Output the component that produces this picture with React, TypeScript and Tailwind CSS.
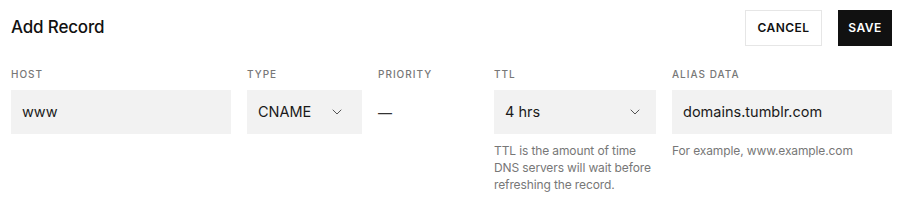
import { ChevronDown } from 'lucide-react'

const labelCls =
  'h-[17px] text-[10px] font-medium uppercase tracking-[0.1em] text-[#777] leading-[17px]'
const boxCls = 'h-[44px] bg-[#f2f2f2] flex items-center px-[11px] text-[14.5px] text-[#1a1a1a]'
const helpCls = 'mt-[8px] text-[12px] leading-[17px] text-[#777] tracking-[-0.01em]'

export default function App() {
  return (
    <div
      className="w-[898px] h-[211px] bg-white pl-[11px] pr-[6px] pt-[10px]"
      style={{ fontFamily: 'Inter, "Liberation Sans", sans-serif' }}
    >
      <header className="flex items-center justify-between h-[36px]">
        <h1 className="text-[17px] font-medium text-[#111] tracking-[-0.01em]">Add Record</h1>
        <div className="flex gap-4">
          <button className="h-[36px] w-[77px] border border-[#e6e6e6] text-[12px] font-semibold tracking-[0.04em] text-[#111]">
            CANCEL
          </button>
          <button className="h-[36px] w-[54px] bg-[#111] text-[12px] font-semibold tracking-[0.04em] text-white">
            SAVE
          </button>
        </div>
      </header>

      <div className="mt-[20px] grid grid-cols-[220px_115px_100px_162px_220px] gap-x-4">
        <div>
          <div className={labelCls}>Host</div>
          <div className={`${boxCls} mt-[7px]`}>www</div>
        </div>
        <div>
          <div className={labelCls}>Type</div>
          <div className={`${boxCls} mt-[7px] justify-between pr-[17px]`}>
            <span>CNAME</span>
            <ChevronDown className="w-4 h-4 text-[#555]" strokeWidth={1.5} />
          </div>
        </div>
        <div>
          <div className={labelCls}>Priority</div>
          <div className="mt-[7px] h-[44px] flex items-center text-[14px] text-[#333]">—</div>
        </div>
        <div>
          <div className={labelCls}>TTL</div>
          <div className={`${boxCls} mt-[7px] justify-between pr-[13px]`}>
            <span>4 hrs</span>
            <ChevronDown className="w-4 h-4 text-[#555]" strokeWidth={1.5} />
          </div>
          <p className={helpCls}>
            TTL is the amount of time DNS servers will wait before refreshing the record.
          </p>
        </div>
        <div>
          <div className={labelCls}>Alias Data</div>
          <div className={`${boxCls} mt-[7px]`}>domains.tumblr.com</div>
          <p className={helpCls}>For example, www.example.com</p>
        </div>
      </div>
    </div>
  )
}
